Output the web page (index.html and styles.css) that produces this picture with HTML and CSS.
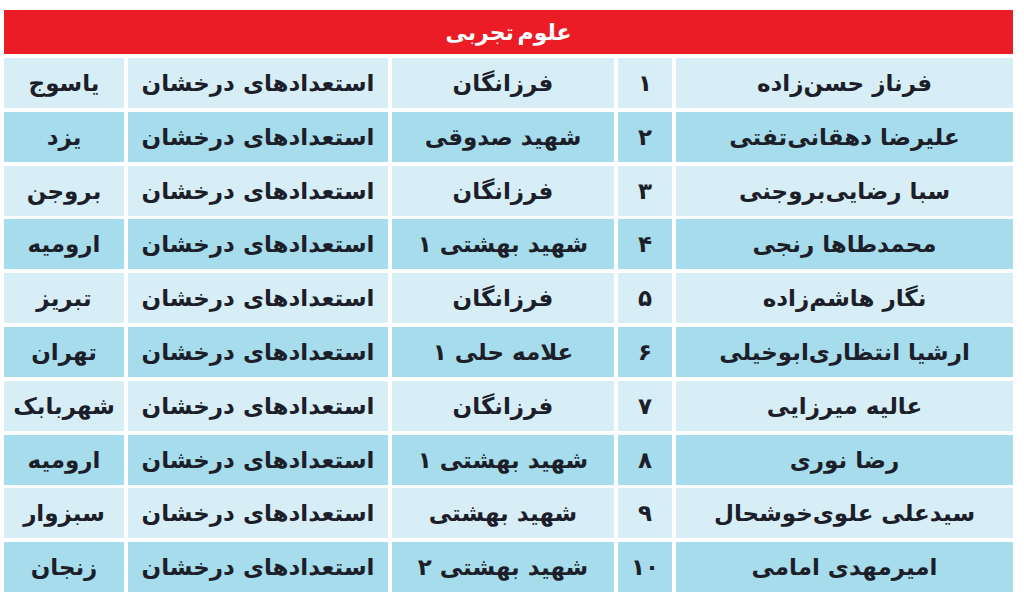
FILE: index.html
```html
<!DOCTYPE html>
<html lang="fa" dir="rtl">
<head>
<meta charset="utf-8">
<link rel="stylesheet" href="styles.css">
</head>
<body>
<div class="board">
  <div class="title">علوم تجربی</div>
  <div class="row light"><div class="cell name">فرناز حسن‌زاده</div><div class="cell rank">۱</div><div class="cell school">فرزانگان</div><div class="cell type">استعدادهای درخشان</div><div class="cell city">یاسوج</div></div>
  <div class="row dark"><div class="cell name">علیرضا دهقانی‌تفتی</div><div class="cell rank">۲</div><div class="cell school">شهید صدوقی</div><div class="cell type">استعدادهای درخشان</div><div class="cell city">یزد</div></div>
  <div class="row light"><div class="cell name">سبا رضایی‌بروجنی</div><div class="cell rank">۳</div><div class="cell school">فرزانگان</div><div class="cell type">استعدادهای درخشان</div><div class="cell city">بروجن</div></div>
  <div class="row dark"><div class="cell name">محمدطاها رنجی</div><div class="cell rank">۴</div><div class="cell school">شهید بهشتی ۱</div><div class="cell type">استعدادهای درخشان</div><div class="cell city">ارومیه</div></div>
  <div class="row light"><div class="cell name">نگار هاشم‌زاده</div><div class="cell rank">۵</div><div class="cell school">فرزانگان</div><div class="cell type">استعدادهای درخشان</div><div class="cell city">تبریز</div></div>
  <div class="row dark"><div class="cell name">ارشیا انتظاری‌ابوخیلی</div><div class="cell rank">۶</div><div class="cell school">علامه حلی ۱</div><div class="cell type">استعدادهای درخشان</div><div class="cell city">تهران</div></div>
  <div class="row light"><div class="cell name">عالیه میرزایی</div><div class="cell rank">۷</div><div class="cell school">فرزانگان</div><div class="cell type">استعدادهای درخشان</div><div class="cell city">شهربابک</div></div>
  <div class="row dark"><div class="cell name">رضا نوری</div><div class="cell rank">۸</div><div class="cell school">شهید بهشتی ۱</div><div class="cell type">استعدادهای درخشان</div><div class="cell city">ارومیه</div></div>
  <div class="row light"><div class="cell name">سیدعلی علوی‌خوشحال</div><div class="cell rank">۹</div><div class="cell school">شهید بهشتی</div><div class="cell type">استعدادهای درخشان</div><div class="cell city">سبزوار</div></div>
  <div class="row dark"><div class="cell name">امیرمهدی امامی</div><div class="cell rank">۱۰</div><div class="cell school">شهید بهشتی ۲</div><div class="cell type">استعدادهای درخشان</div><div class="cell city">زنجان</div></div>
</div>
</body>
</html>
```
FILE: styles.css
```css
html, body {
  margin: 0;
  padding: 0;
  background: #ffffff;
}
body {
  font-family: "DejaVu Sans", "Noto Sans", sans-serif;
  color: #1c1f2a;
}
.board {
  direction: rtl;
  width: 1009px;
  margin: 10px 11px 0 4px;
  display: flex;
  flex-direction: column;
  gap: 3.8px;
}
.title {
  height: 44px;
  background: #ec1c27;
  color: #ffffff;
  font-weight: bold;
  font-size: 22px;
  word-spacing: -4px;
  display: flex;
  align-items: center;
  justify-content: center;
  margin-bottom: 0.2px;
}
.row {
  display: grid;
  grid-template-columns: 337px 54px 222px 260px 120px;
  column-gap: 4px;
  height: 50px;
}
.cell {
  display: flex;
  align-items: center;
  justify-content: center;
  font-size: 23px;
  font-weight: bold;
  white-space: nowrap;
  overflow: hidden;
}
.light .cell { background: #d8eef6; }
.dark .cell { background: #a7dcec; }
```
